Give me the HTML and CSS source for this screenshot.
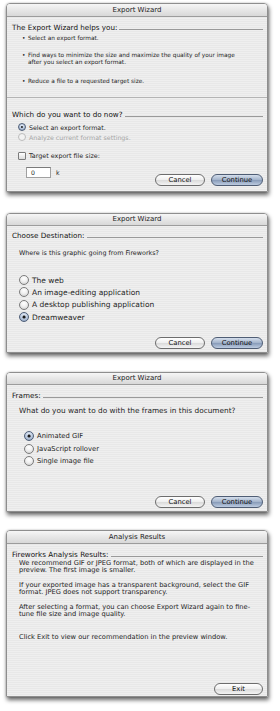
FILE: index.html
```html
<!DOCTYPE html>
<html>
<head>
<meta charset="utf-8">
<link rel="stylesheet" href="styles.css">
</head>
<body>
<div class="page">

  <div class="win win-1">
    <div class="titlebar tb-13">Export Wizard</div>
    <div class="content c1">
      <div class="heading h1a">The Export Wizard helps you:</div>
      <ul class="bullets">
        <li class="b1">Select an export format.</li>
        <li class="b2">Find ways to minimize the size and maximize the quality of your image<br>after you select an export format.</li>
        <li class="b3">Reduce a file to a requested target size.</li>
      </ul>
      <div class="divider"></div>
      <div class="heading h1b">Which do you want to do now?</div>
      <div class="radios r1">
        <div class="radio-row"><span class="radio on"></span>Select an export format.</div>
        <div class="radio-row disabled"><span class="radio dis"></span>Analyze current format settings.</div>
      </div>
      <div class="bottom-row">
        <div class="left-col">
          <div class="check-row"><span class="checkbox"></span>Target export file size:</div>
          <div class="input-row"><span class="field">0</span><span class="unit">k</span></div>
        </div>
        <div class="buttons">
          <span class="btn">Cancel</span>
          <span class="btn default">Continue</span>
        </div>
      </div>
    </div>
  </div>

  <div class="win win-2">
    <div class="titlebar tb-12">Export Wizard</div>
    <div class="content c2">
      <div class="heading h2a">Choose Destination:</div>
      <p class="question q2">Where is this graphic going from Fireworks?</p>
      <div class="radios r2">
        <div class="radio-row"><span class="radio"></span>The web</div>
        <div class="radio-row"><span class="radio"></span>An image-editing application</div>
        <div class="radio-row"><span class="radio"></span>A desktop publishing application</div>
        <div class="radio-row"><span class="radio on"></span>Dreamweaver</div>
      </div>
      <div class="buttons end">
        <span class="btn">Cancel</span>
        <span class="btn default">Continue</span>
      </div>
    </div>
  </div>

  <div class="win win-3">
    <div class="titlebar tb-12">Export Wizard</div>
    <div class="content c3">
      <div class="heading h3a">Frames:</div>
      <p class="question q3">What do you want to do with the frames in this document?</p>
      <div class="radios r3">
        <div class="radio-row"><span class="radio on"></span>Animated GIF</div>
        <div class="radio-row"><span class="radio"></span>JavaScript rollover</div>
        <div class="radio-row"><span class="radio"></span>Single image file</div>
      </div>
      <div class="buttons end">
        <span class="btn">Cancel</span>
        <span class="btn default">Continue</span>
      </div>
    </div>
  </div>

  <div class="win win-4">
    <div class="titlebar tb-13">Analysis Results</div>
    <div class="content c4">
      <div class="heading h4a">Fireworks Analysis Results:</div>
      <div class="paras">
        <p class="para p1">We recommend GIF or JPEG format, both of which are displayed in the<br>preview. The first image is smaller.</p>
        <p class="para p2">If your exported image has a transparent background, select the GIF<br>format. JPEG does not support transparency.</p>
        <p class="para p3">After selecting a format, you can choose Export Wizard again to fine-<br>tune file size and image quality.</p>
        <p class="para p4">Click Exit to view our recommendation in the preview window.</p>
      </div>
      <div class="buttons end">
        <span class="btn exit">Exit</span>
      </div>
    </div>
  </div>

</div>
</body>
</html>
```

FILE: styles.css
```css
html, body {
  margin: 0;
  padding: 0;
  background: #ffffff;
}

body {
  font-family: "DejaVu Sans", "Noto Sans", sans-serif;
  color: #1e1e1e;
  width: 280px;
  height: 711px;
  overflow: hidden;
}

.page {
  display: flex;
  flex-direction: column;
  padding: 3px 0 0 6px;
}

.win {
  width: 262px;
  box-sizing: border-box;
  border: 1px solid #8e8e8e;
  border-radius: 4px 4px 0 0;
  background: repeating-linear-gradient(180deg, #efefef 0, #efefef 1px, #e8e8e8 1px, #e8e8e8 2px);
  box-shadow: 1px 3px 4px rgba(0, 0, 0, 0.6), 0 0 2px rgba(0, 0, 0, 0.25);
  display: flex;
  flex-direction: column;
  overflow: hidden;
}

.win-1 { height: 189px; }
.win-2 { height: 140px; margin-top: 21px; }
.win-3 { height: 140px; margin-top: 19px; }
.win-4 { height: 167px; margin-top: 18px; }

.titlebar {
  flex: none;
  box-sizing: border-box;
  background: linear-gradient(180deg, #f6f6f6 0%, #e8e8e8 45%, #d8d8d8 100%);
  border-bottom: 1px solid #9c9c9c;
  text-align: center;
  font-size: 7px;
  color: #222;
}
.tb-13 { height: 13px; line-height: 12px; }
.tb-12 { height: 12px; line-height: 11px; }

.content {
  flex: 1;
  display: flex;
  flex-direction: column;
  padding: 0 4px 0 5px;
}

.heading {
  display: flex;
  align-items: center;
  font-size: 7.2px;
  line-height: 9px;
  white-space: nowrap;
  color: #111;
}
.heading::after {
  content: "";
  flex: 1;
  height: 1px;
  background: #9a9a9a;
  margin: 3px 0 0 2px;
}

/* Panel 1 */
.h1a { margin-top: 6px; }
.bullets {
  list-style: none;
  margin: 3px 0 0 0;
  padding: 0 0 0 10px;
  font-size: 5.8px;
  line-height: 7px;
  white-space: nowrap;
}
.bullets li { position: relative; padding-left: 6px; }
.bullets li::before {
  content: "•";
  position: absolute;
  left: 0;
  top: 0;
}
.b2 { margin-top: 10px; }
.b3 { margin-top: 12px; }

.divider {
  height: 1px;
  background: #b4b4b4;
  margin: 12px -4px 0 -5px;
}
.h1b { margin-top: 12px; }

.radios {
  display: flex;
  flex-direction: column;
  white-space: nowrap;
}
.radio-row {
  display: flex;
  align-items: center;
}
.radio {
  flex: none;
  box-sizing: border-box;
  border-radius: 50%;
  border: 1px solid #7c7c7c;
  background: radial-gradient(circle at 50% 30%, #ffffff 0%, #f0f0f0 45%, #c9c9c9 100%);
  position: relative;
}
.radio.on {
  border-color: #4f5f78;
  background: radial-gradient(circle at 50% 30%, #e6eefa 0%, #b7c6dc 55%, #7d92b2 100%);
}
.radio.on::after {
  content: "";
  position: absolute;
  left: 50%;
  top: 50%;
  width: 36%;
  height: 36%;
  transform: translate(-50%, -50%);
  border-radius: 50%;
  background: #1a1a1a;
}
.radio.dis {
  border-color: #bcbcbc;
  background: #f2f2f2;
}
.disabled { color: #a6a6a6; }

.r1 { margin: 3px 0 0 6px; font-size: 6.3px; }
.r1 .radio-row { height: 10px; }
.r1 .radio { width: 8px; height: 8px; margin-right: 3px; }

.bottom-row {
  display: flex;
  justify-content: space-between;
  align-items: flex-end;
  margin-top: 9px;
}
.left-col {
  display: flex;
  flex-direction: column;
  margin: 0 0 11px 6px;
  font-size: 6.4px;
  white-space: nowrap;
}
.check-row {
  display: flex;
  align-items: center;
  height: 10px;
}
.checkbox {
  width: 8px;
  height: 8px;
  box-sizing: border-box;
  border: 1px solid #7c7c7c;
  border-radius: 1px;
  background: linear-gradient(180deg, #ffffff, #dcdcdc);
  margin-right: 3px;
}
.input-row {
  display: flex;
  align-items: center;
  margin: 6px 0 0 8px;
}
.field {
  box-sizing: border-box;
  width: 25px;
  height: 11px;
  line-height: 10px;
  border: 1px solid #a0a0a0;
  border-top-color: #7a7a7a;
  background: #fff;
  padding-left: 4px;
  font-size: 6.2px;
}
.unit { margin-left: 5px; font-size: 6.2px; }

.buttons {
  display: flex;
  gap: 6px;
  margin-bottom: 3px;
}
.buttons.end {
  margin-top: auto;
  justify-content: flex-end;
}
.btn {
  box-sizing: border-box;
  height: 12px;
  line-height: 10px;
  border-radius: 6px;
  border: 1px solid #6d6d6d;
  background: linear-gradient(180deg, #ffffff 0%, #f0f0f0 45%, #dcdcdc 55%, #f4f4f4 100%);
  text-align: center;
  font-size: 6.8px;
  color: #111;
  width: 50px;
}
.btn.default {
  width: 52px;
  border-color: #4f5d74;
  background: linear-gradient(180deg, #d4deec 0%, #a6b6cd 45%, #8b9ebb 55%, #bccbe0 100%);
}
.btn.exit { width: 49px; }

/* Panel 2 */
.h2a { margin-top: 5px; }
.question {
  margin: 0;
  white-space: nowrap;
}
.q2 { font-size: 6.4px; line-height: 9px; margin: 9px 0 0 7px; }
.r2 { margin: 16px 0 0 7px; font-size: 7.5px; }
.r2 .radio-row { height: 12.3px; }
.r2 .radio { width: 10px; height: 10px; margin-right: 3px; }
.win-2 .buttons { margin-bottom: 3px; }

/* Panel 3 */
.h3a { margin-top: 6px; }
.q3 { font-size: 7.35px; line-height: 9px; margin: 6px 0 0 7px; }
.r3 { margin: 15px 0 0 12px; font-size: 6.8px; }
.r3 .radio-row { height: 12.5px; }
.r3 .radio { width: 10px; height: 10px; margin-right: 3px; }
.win-3 .buttons { margin-bottom: 3px; }

/* Panel 4 */
.h4a { margin-top: 6px; }
.paras {
  margin: 1px 0 0 7px;
  font-size: 6.7px;
  line-height: 7px;
  white-space: nowrap;
}
.para { margin: 0; }
.p2, .p3 { margin-top: 8px; }
.p4 { margin-top: 16px; }
.win-4 .buttons { margin-bottom: 1px; }
```
